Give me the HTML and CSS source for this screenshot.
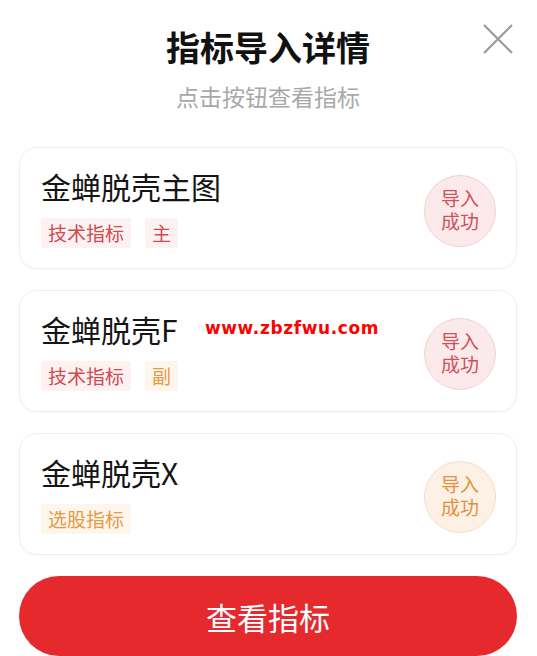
FILE: index.html
```html
<!DOCTYPE html>
<html lang="zh">
<head>
<meta charset="utf-8">
<link rel="stylesheet" href="styles.css">
</head>
<body>
<div class="sheet">
  <header class="head">
    <h1 class="title">指标导入详情</h1>
    <p class="sub">点击按钮查看指标</p>
    <button class="close" aria-label="关闭">
      <svg width="32" height="32" viewBox="0 0 32 32"><path d="M2 2L30 30M30 2L2 30" stroke="#9a9a9a" stroke-width="2.2" fill="none"/></svg>
    </button>
  </header>
  <div class="list">
    <div class="card">
      <div class="info">
        <div class="name">金蝉脱壳主图</div>
        <div class="tags"><span class="tag red">技术指标</span><span class="tag red">主</span></div>
      </div>
      <div class="badge red"><span>导入</span><span>成功</span></div>
    </div>
    <div class="card">
      <div class="info">
        <div class="name">金蝉脱壳F</div>
        <div class="tags"><span class="tag red">技术指标</span><span class="tag orange">副</span></div>
      </div>
      <div class="badge red"><span>导入</span><span>成功</span></div>
    </div>
    <div class="card">
      <div class="info">
        <div class="name">金蝉脱壳X</div>
        <div class="tags"><span class="tag orange">选股指标</span></div>
      </div>
      <div class="badge orange"><span>导入</span><span>成功</span></div>
    </div>
  </div>
  <button class="main">查看指标</button>
  <div class="mark">www.zbzfwu.com</div>
</div>
</body>
</html>
```
FILE: styles.css
```css
html, body { margin: 0; padding: 0; background: #fff; }
body { font-family: "Noto Sans CJK SC", "Noto Sans", sans-serif; color: #111; overflow: hidden; }
.sheet { position: relative; padding: 0 20px 0 19px; height: 656px; box-sizing: border-box; }
.head { position: relative; text-align: center; padding-top: 26px; }
.title { margin: 0; font-size: 34px; line-height: 42px; font-weight: 700; color: #111; }
.sub { margin: 13px 0 0; font-size: 23px; line-height: 30px; color: #a8a8a8; }
.close { position: absolute; right: 3px; top: 23px; width: 32px; height: 32px; border: 0; background: none; padding: 0; }
.close svg { display: block; }
.list { display: flex; flex-direction: column; gap: 21px; margin-top: 36px; }
.card { display: flex; align-items: center; justify-content: space-between; height: 122px; box-sizing: border-box; padding: 20px 20px 21px 21px; border: 1px solid #eeeeee; border-radius: 18px; box-shadow: 0 1px 3px rgba(0,0,0,0.03); }
.info { align-self: flex-start; }
.name { font-size: 30px; line-height: 36px; color: #151515; }
.tags { display: flex; gap: 14px; margin-top: 14px; }
.tag { font-size: 19px; line-height: 30px; padding: 0 7px; border-radius: 3px; }
.tag.red { color: #cf4b50; background: #fdf1f1; }
.tag.orange { color: #e59a45; background: #fef5ec; }
.badge { width: 72px; height: 72px; border-radius: 50%; box-sizing: border-box; display: flex; flex-direction: column; align-items: center; justify-content: center; text-align: center; font-family: "Liberation Sans", "Noto Sans CJK SC", sans-serif; font-size: 19px; line-height: 23px; margin-top: 6px; }
.badge span { display: block; height: 23px; }
.badge.red { background: #fce9eb; border: 1px solid #f1d2d5; color: #cf5257; }
.badge.orange { background: #fdf1e5; border: 1px solid #f4ddc5; color: #e3913f; }
.main { display: block; width: 100%; height: 80px; margin-top: 21px; border: 0; border-radius: 40px; background: #e5292d; color: #fff; font-family: inherit; font-size: 31px; }
.mark { position: absolute; left: 205px; top: 317px; font-family: "DejaVu Sans", "Liberation Sans", sans-serif; font-weight: 700; font-size: 17px; letter-spacing: 0.6px; color: #ff0000; line-height: 22px; }
```
